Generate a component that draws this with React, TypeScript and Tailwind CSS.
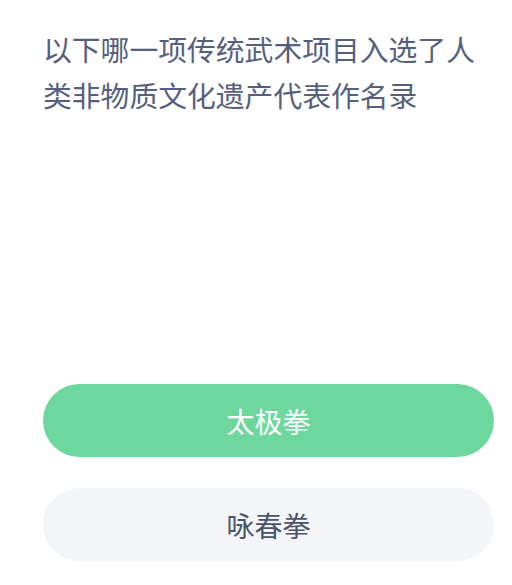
export default function App() {
  const options = [
    { label: '太极拳', correct: true },
    { label: '咏春拳', correct: false },
  ];

  return (
    <div
      className="w-[512px] h-[585px] bg-white overflow-hidden pl-[43px] pr-[18px] pt-[26px]"
      style={{ fontFamily: '"Noto Sans CJK SC", "Noto Sans", sans-serif' }}
    >
      <p className="text-[28.8px] leading-[46px] text-[#56607e]">
        以下哪一项传统武术项目入选了人类非物质文化遗产代表作名录
      </p>

      {/* answer options */}
      <div className="mt-[266px] flex flex-col gap-[31px]">
        {options.map((opt) =>
          opt.correct ? (
            <button
              key={opt.label}
              className="h-[73px] w-full rounded-full bg-[#6dd79e] text-white text-[28px] flex items-center justify-center"
            >
              {opt.label}
            </button>
          ) : (
            <button
              key={opt.label}
              className="h-[73px] w-full rounded-full bg-[#f3f5f8] text-[#4b5468] text-[28px] flex items-center justify-center"
            >
              {opt.label}
            </button>
          )
        )}
      </div>
    </div>
  );
}
